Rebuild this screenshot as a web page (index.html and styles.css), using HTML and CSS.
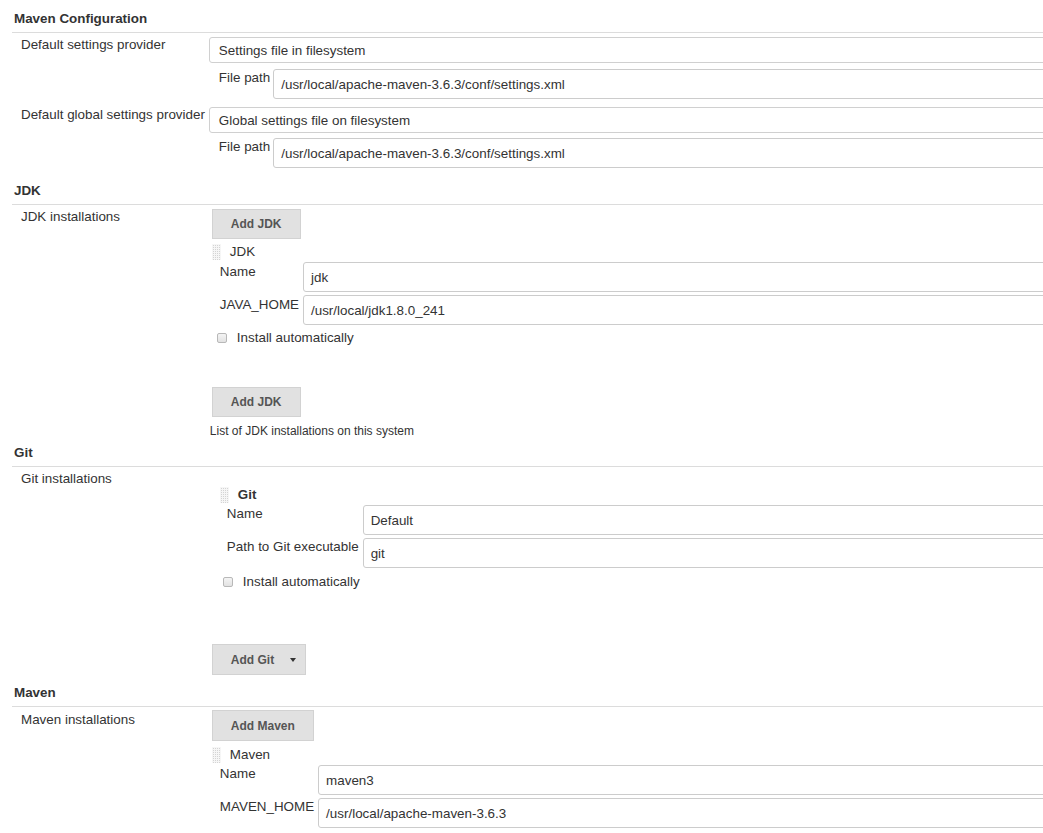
FILE: index.html
```html
<!DOCTYPE html>
<html>
<head>
<meta charset="utf-8">
<title>Global Tool Configuration</title>
<link rel="stylesheet" href="styles.css">
</head>
<body>
<div class="page">
  <div class="section-title">Maven Configuration</div>

  <div class="label r-a">Default settings provider</div>
  <div class="field r-a">
    <div class="select">Settings file in filesystem</div>
    <div class="subform">
      <div class="sublabel">File path</div>
      <div class="input">/usr/local/apache-maven-3.6.3/conf/settings.xml</div>
    </div>
  </div>

  <div class="label r-b">Default global settings provider</div>
  <div class="field r-b">
    <div class="select">Global settings file on filesystem</div>
    <div class="subform sub-b">
      <div class="sublabel">File path</div>
      <div class="input">/usr/local/apache-maven-3.6.3/conf/settings.xml</div>
    </div>
  </div>

  <div class="section-title t-jdk">JDK</div>
  <div class="label r-sec">JDK installations</div>
  <div class="field r-sec jdkf">
    <div class="btn">Add JDK</div>
    <div class="chunk-head">
      <span class="handle"></span>
      <span class="chunk-name">JDK</span>
    </div>
    <div class="repeat-form">
      <div class="sublabel">Name</div>
      <div class="input">jdk</div>
      <div class="sublabel">JAVA_HOME</div>
      <div class="input">/usr/local/jdk1.8.0_241</div>
    </div>
    <div class="check-row">
      <span class="checkbox"></span>
      <span>Install automatically</span>
    </div>
    <div class="btn btn-bottom">Add JDK</div>
    <div class="help">List of JDK installations on this system</div>
  </div>

  <div class="section-title t-git">Git</div>
  <div class="label r-sec">Git installations</div>
  <div class="field r-sec git">
    <div class="chunk-head">
      <span class="handle"></span>
      <span class="chunk-name bold">Git</span>
    </div>
    <div class="repeat-form">
      <div class="sublabel">Name</div>
      <div class="input">Default</div>
      <div class="sublabel">Path to Git executable</div>
      <div class="input">git</div>
    </div>
    <div class="check-row">
      <span class="checkbox"></span>
      <span>Install automatically</span>
    </div>
    <div class="btn btn-git">Add Git <span class="caret"></span></div>
  </div>

  <div class="section-title t-maven">Maven</div>
  <div class="label r-sec r-maven">Maven installations</div>
  <div class="field r-sec mvf">
    <div class="btn">Add Maven</div>
    <div class="chunk-head">
      <span class="handle"></span>
      <span class="chunk-name">Maven</span>
    </div>
    <div class="repeat-form">
      <div class="sublabel">Name</div>
      <div class="input">maven3</div>
      <div class="sublabel">MAVEN_HOME</div>
      <div class="input">/usr/local/apache-maven-3.6.3</div>
    </div>
  </div>
</div>
</body>
</html>
```

FILE: styles.css
```css
html, body {
  margin: 0;
  padding: 0;
  overflow: hidden;
  background: #fff;
}

body {
  font-family: "Liberation Sans", Arial, sans-serif;
  font-size: 13.4px;
  color: #333;
}

.page {
  width: 1400px;
  padding: 11px 0 0 14px;
  display: grid;
  grid-template-columns: auto 1fr;
  align-items: start;
}

.section-title {
  grid-column: 1 / -1;
  font-weight: bold;
  line-height: 16px;
  padding: 0 0 5px 2px;
  margin-left: -2px;
  border-bottom: 1px solid #dcdcdc;
}

.t-jdk { margin-top: 15px; }
.t-git { margin-top: 7px; }
.t-maven { margin-top: 10px; }

.label {
  padding: 0 4px 0 7px;
  line-height: 16px;
  white-space: nowrap;
}

.r-a { margin-top: 4px; }
.r-b { margin-top: 8px; }
.r-sec { margin-top: 4px; }
.label.r-maven { padding-top: 1px; }

.field {
  display: flex;
  flex-direction: column;
  min-width: 0;
}

.select {
  height: 26px;
  box-sizing: border-box;
  border: 1px solid #d0d0d0;
  border-radius: 3px;
  padding: 0 9px;
  display: flex;
  align-items: center;
  background: #fff;
}

.subform {
  margin-top: 6px;
  padding-left: 10px;
  display: grid;
  grid-template-columns: auto 1fr;
  align-items: start;
}

.sub-b { margin-top: 5px; }

.sublabel {
  line-height: 16px;
  padding: 1px 3px 0 0;
  white-space: nowrap;
}

.input {
  height: 30px;
  box-sizing: border-box;
  border: 1px solid #cccccc;
  border-radius: 3px;
  padding: 0 7px;
  display: flex;
  align-items: center;
  background: #fff;
  white-space: nowrap;
}

.btn {
  margin-left: 3px;
  width: max-content;
  height: 30px;
  box-sizing: border-box;
  padding: 0 18px;
  display: flex;
  align-items: center;
  background: #e1e1e1;
  border: 1px solid #d2d2d2;
  color: #555;
  font-size: 12px;
  font-weight: bold;
}

.btn-bottom { margin-top: 41px; }

.btn-git {
  margin-top: 54px;
  height: 31px;
  padding-right: 9px;
}

.caret {
  width: 0;
  height: 0;
  margin-left: 16px;
  border-left: 3.5px solid transparent;
  border-right: 3.5px solid transparent;
  border-top: 4px solid #333;
}

.help {
  margin-top: 7px;
  padding-left: 1px;
  font-size: 12px;
  line-height: 14px;
}

.chunk-head {
  margin-top: 5px;
  display: flex;
  align-items: center;
  line-height: 16px;
}

.handle {
  width: 9px;
  height: 16px;
  margin-left: 3px;
  background-color: #d4d4d4;
  background-image:
    linear-gradient(90deg, #f6f6f6 1px, transparent 1px),
    linear-gradient(#f6f6f6 1px, transparent 1px);
  background-size: 2px 2px;
}

.chunk-name { margin-left: 9px; }
.bold { font-weight: bold; }

.repeat-form {
  margin-top: 2px;
  padding-left: 11px;
  display: grid;
  grid-template-columns: auto 1fr;
  row-gap: 3px;
  align-items: start;
}

.repeat-form .sublabel { padding: 1px 4px 0 0; }
.jdkf .repeat-form .sublabel { padding-top: 2px; }

.check-row {
  margin-top: 5px;
  padding-left: 8px;
  display: flex;
  align-items: center;
  line-height: 16px;
}

.checkbox {
  width: 10px;
  height: 10px;
  box-sizing: border-box;
  border: 1px solid #b8b8b8;
  border-radius: 2px;
  background: linear-gradient(#f4f4f4, #e2e2e2);
  margin-right: 10px;
}

.git .chunk-head { margin-top: 16px; }
.git .handle { margin-left: 11px; }
.git .repeat-form { margin-top: 2px; padding-left: 18px; }
.git .check-row { margin-top: 6px; padding-left: 14px; }

.mvf .btn { height: 31px; margin-top: -1px; }
.mvf .chunk-head { margin-top: 6px; }
.mvf .repeat-form { margin-top: 2px; }
```
